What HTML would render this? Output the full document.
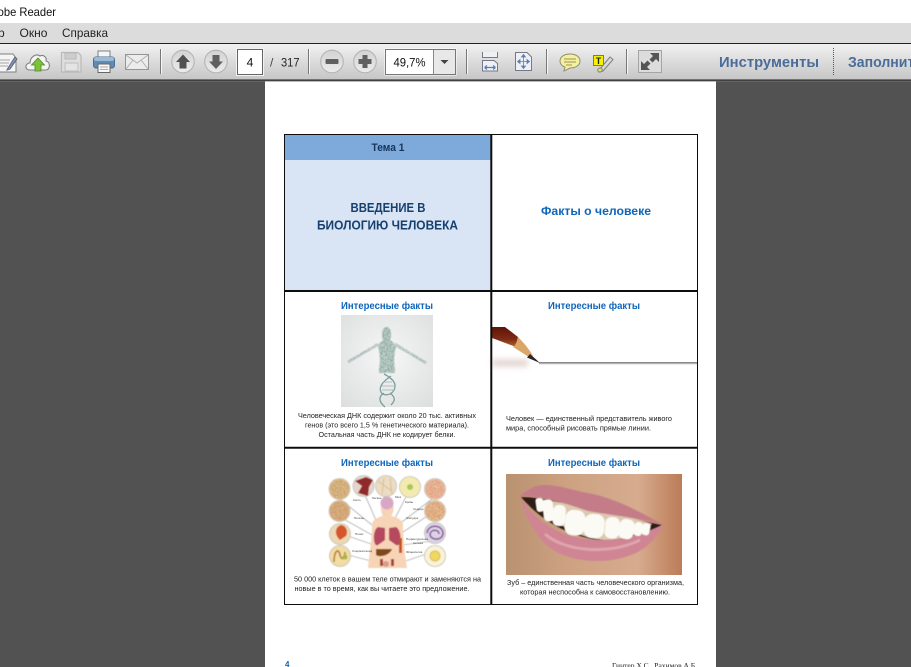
<!DOCTYPE html>
<html><head><meta charset="utf-8"><style>
html,body{margin:0;padding:0;width:911px;height:667px;overflow:hidden;background:#525252}
svg{display:block}
text{font-family:"Liberation Sans",sans-serif}
</style></head><body>
<svg width="911" height="667" viewBox="0 0 911 667" xmlns="http://www.w3.org/2000/svg">
<defs>
<linearGradient id="tb" x1="0" y1="0" x2="0" y2="1"><stop offset="0" stop-color="#f1f1f1"/><stop offset="1" stop-color="#c6c6c6"/></linearGradient>
<linearGradient id="btn" x1="0" y1="0" x2="0" y2="1"><stop offset="0" stop-color="#d2d2d2"/><stop offset="1" stop-color="#ececec"/></linearGradient>
<linearGradient id="skin" x1="0" y1="0" x2="1" y2="0"><stop offset="0" stop-color="#b99270"/><stop offset=".35" stop-color="#cda282"/><stop offset=".75" stop-color="#d7ab8e"/><stop offset="1" stop-color="#bb7c58"/></linearGradient>
<linearGradient id="penc" x1="0" y1="0" x2="0" y2="1"><stop offset="0" stop-color="#5e140c"/><stop offset=".6" stop-color="#7e2a14"/><stop offset="1" stop-color="#b1682e"/></linearGradient>
<radialGradient id="dnabg" cx=".5" cy=".45" r=".75"><stop offset="0" stop-color="#f6f6f6"/><stop offset="1" stop-color="#dcdede"/></radialGradient>
<filter id="b" x="-5%" y="-5%" width="110%" height="110%"><feGaussianBlur stdDeviation=".33"/></filter>
<filter id="b2" x="-20%" y="-20%" width="140%" height="140%"><feGaussianBlur stdDeviation=".55"/></filter>
<filter id="b3" x="-30%" y="-80%" width="160%" height="260%"><feGaussianBlur stdDeviation="2.6"/></filter>
<filter id="speck" x="-5%" y="-5%" width="110%" height="110%"><feTurbulence type="fractalNoise" baseFrequency="0.9" numOctaves="2" seed="3" result="n"/><feColorMatrix in="n" type="matrix" values="0 0 0 0 0 0 0 0 0 0 0 0 0 0 0 0 0 0 8 -3.6" result="m"/><feComposite in="SourceGraphic" in2="m" operator="in"/><feGaussianBlur stdDeviation=".45"/></filter>
</defs>

<!-- title / menu / toolbar -->
<rect width="911" height="23" fill="#fff"/>
<text x="-16" y="16" font-size="12" fill="#111" textLength="72" lengthAdjust="spacingAndGlyphs">Adobe Reader</text>
<rect y="23" width="911" height="20" fill="#dcdcdc"/>
<text x="-2" y="37" font-size="12" fill="#222">р</text>
<text x="19.5" y="37" font-size="12" fill="#222" textLength="28" lengthAdjust="spacingAndGlyphs">Окно</text>
<text x="62" y="37" font-size="12" fill="#222" textLength="46" lengthAdjust="spacingAndGlyphs">Справка</text>
<rect y="43" width="911" height="1" fill="#222"/>
<rect y="44" width="911" height="35.5" fill="url(#tb)"/>
<rect y="79.5" width="911" height="1.2" fill="#222"/>
<rect y="80.7" width="911" height=".8" fill="#777"/>

<!-- edit -->
<path d="M-3 54H13L16 58V72H-3Z" fill="#f5f5f5" stroke="#808080"/>
<path d="M0 60H10M0 63H9M0 66H8" stroke="#a5a5a5"/>
<path d="M8 68L15 57L17 59L10 69L7 70Z" fill="#7d97b8" stroke="#667"/>
<!-- cloud -->
<path d="M30 70C24 70 25 63 30 63C30 57 36 53 40 56C44 54 47 58 46 61C51 62 50 70 46 70Z" fill="#f4f4f4" stroke="#808080" stroke-width="1.1"/>
<path d="M38 58L44.5 65H41V71H35V65H31.5Z" fill="#7cc23d" stroke="#4c8a25" stroke-width=".8"/>
<!-- save -->
<path d="M61.5 52.5H78L81 55.5V72H61.5Z" fill="#dedede" stroke="#b9b9b9" stroke-width="1.2"/>
<rect x="65" y="53" width="11" height="6" fill="#cdcdcd" stroke="#b9b9b9"/>
<rect x="65" y="63" width="13" height="8" fill="#e4e4e4" stroke="#bdbdbd"/>
<!-- print -->
<rect x="98" y="51" width="12" height="7" fill="#f5f5f5" stroke="#808080"/>
<rect x="93.5" y="57" width="21" height="11" rx="2.5" fill="#5f8cb5" stroke="#4a6d90"/>
<rect x="94" y="57" width="20" height="4" rx="2" fill="#9dbad4"/>
<rect x="98" y="64" width="12" height="8.5" fill="#f8f8f8" stroke="#666"/>
<path d="M100 67H108M100 69.5H108" stroke="#aaa"/>
<!-- mail -->
<rect x="125.5" y="54.5" width="23" height="15" fill="#ececec" stroke="#949494"/>
<path d="M126 55L137 63L148 55M126 69L133 60M148 69L141 60" fill="none" stroke="#b0b0b0"/>

<g stroke="#777"><path d="M160.5 49V74M308.5 49V74M466.5 49V74M546.5 49V74M626.5 49V74"/></g>
<g stroke="#fff" opacity=".8"><path d="M161.5 49V74M309.5 49V74M467.5 49V74M547.5 49V74M627.5 49V74"/></g>

<!-- nav buttons -->
<g fill="url(#btn)" stroke="#b4b4b4" stroke-width="1.1"><circle cx="183" cy="61.5" r="11.3"/><circle cx="216" cy="61.5" r="11.3"/><circle cx="332" cy="61.5" r="11.3"/><circle cx="365" cy="61.5" r="11.3"/></g>
<path d="M183 54.5L190 62H186.5V68.5H179.5V62H176Z" fill="#505050"/>
<path d="M216 69L209 61.5H212.5V55H219.5V61.5H223Z" fill="#606060"/>
<rect x="325.5" y="59" width="13" height="5" rx="1" fill="#606060"/>
<path d="M362.5 55H367.5V59H371.5V64H367.5V68H362.5V64H358.5V59H362.5Z" fill="#606060"/>

<!-- page input -->
<rect x="236.5" y="48.5" width="27" height="27" fill="#fff" stroke="#f2f2f2"/>
<rect x="237.5" y="49.5" width="25" height="25" fill="#fff" stroke="#666"/>
<text x="250" y="66.5" font-size="12" fill="#111" text-anchor="middle">4</text>
<text x="270" y="66.5" font-size="12" fill="#444">/</text>
<text x="281" y="66.5" font-size="12" fill="#222" textLength="18.5" lengthAdjust="spacingAndGlyphs">317</text>
<!-- zoom combo -->
<rect x="384.5" y="48.5" width="72" height="27" fill="#fff"/>
<rect x="385.5" y="49.5" width="70" height="25" fill="#fff" stroke="#777"/>
<rect x="434" y="50" width="21" height="24" fill="#e8e8e8"/>
<path d="M433.5 50V74" stroke="#888"/>
<path d="M440.5 60H448.5L444.5 64Z" fill="#444"/>
<text x="393.5" y="66.5" font-size="12" fill="#111" textLength="32" lengthAdjust="spacingAndGlyphs">49,7%</text>

<!-- fit width -->
<path d="M482.5 52V57.5H497.5V52M482.5 71V60.5H494L497.5 63.5V71Z" fill="#eef0f5" stroke="#778"/>
<path d="M484.5 67.5H495.5M484.5 67.5L487 65.5M484.5 67.5L487 69.5M495.5 67.5L493 65.5M495.5 67.5L493 69.5" fill="none" stroke="#5a7db5" stroke-width="1.2"/>
<!-- fit page -->
<path d="M515.5 52.5H527L531.5 57V70.5H515.5Z" fill="#eef0f5" stroke="#778"/>
<path d="M523.5 54.5V68.5M517.5 61.5H529.5M523.5 54.5L521.5 57H525.5ZM523.5 68.5L521.5 66H525.5ZM517.5 61.5L520 59.5V63.5ZM529.5 61.5L527 59.5V63.5Z" fill="#5a7db5" stroke="#5a7db5" stroke-width=".8"/>
<!-- comment -->
<path d="M570 54C564 54 560 57 560 61C560 64 562 66 565 67L564 71L570 68C576 68 580 65 580 61C580 57 576 54 570 54Z" fill="#f5f0a0" stroke="#8f8f70"/>
<path d="M564 59H576M564 62H576M566 65H572" stroke="#99945a"/>
<!-- highlight -->
<rect x="593.5" y="55.5" width="10" height="10" fill="#f7f200" stroke="#777"/>
<text x="598.5" y="64" font-size="9" font-weight="bold" fill="#222" text-anchor="middle">T</text>
<path d="M600 69L610 57L613 59.5L603 71L599 72Z" fill="#d9d9d9" stroke="#808080"/>
<ellipse cx="600" cy="70" rx="2.3" ry="2" fill="#e3e34a" stroke="#808080"/>
<!-- expand -->
<rect x="638.5" y="50.5" width="23" height="22" fill="#dcdcdc" stroke="#a5a5a5"/>
<path d="M650 53H659V62L656 59L652.5 62.5L649.5 59.5L653 56Z" fill="#555"/>
<path d="M650 70H641V61L644 64L647.5 60.5L650.5 63.5L647 67Z" fill="#555"/>

<text x="719" y="67" font-size="14.5" font-weight="bold" fill="#4b6c99" textLength="100" lengthAdjust="spacingAndGlyphs">Инструменты</text>
<path d="M833.5 48V75" stroke="#555" stroke-dasharray="1 1"/>
<text x="848" y="67" font-size="14.5" font-weight="bold" fill="#4b6c99" textLength="75" lengthAdjust="spacingAndGlyphs">Заполнить</text>

<!-- page -->
<rect x="265" y="81.5" width="451" height="586" fill="#fff"/>

<g filter="url(#b)">
<!-- first row -->
<rect x="285" y="135" width="206" height="25" fill="#7eaadb"/>
<rect x="285" y="160" width="206" height="130" fill="#d9e5f5"/>
<text x="388" y="151" font-size="11" font-weight="bold" fill="#17365d" text-anchor="middle" textLength="33" lengthAdjust="spacingAndGlyphs">Тема 1</text>
<text x="388" y="212" font-size="13" font-weight="bold" fill="#17406f" text-anchor="middle" textLength="75" lengthAdjust="spacingAndGlyphs">ВВЕДЕНИЕ В</text>
<text x="387.5" y="229.5" font-size="13" font-weight="bold" fill="#17406f" text-anchor="middle" textLength="141" lengthAdjust="spacingAndGlyphs">БИОЛОГИЮ ЧЕЛОВЕКА</text>
<text x="596" y="215" font-size="12" font-weight="bold" fill="#0f66bb" text-anchor="middle" textLength="110" lengthAdjust="spacingAndGlyphs">Факты о человеке</text>

<!-- headings -->
<g font-size="10.5" font-weight="bold" fill="#0f66bb" text-anchor="middle">
<text x="387" y="309" textLength="92" lengthAdjust="spacingAndGlyphs">Интересные факты</text>
<text x="594" y="309" textLength="92" lengthAdjust="spacingAndGlyphs">Интересные факты</text>
<text x="387" y="466" textLength="92" lengthAdjust="spacingAndGlyphs">Интересные факты</text>
<text x="594" y="466" textLength="92" lengthAdjust="spacingAndGlyphs">Интересные факты</text>
</g>

<!-- DNA image -->
<rect x="341" y="315" width="92" height="92" fill="url(#dnabg)"/>
<g filter="url(#b2)" opacity=".5">
<path d="M348 362L378 345M426 363L395 345" stroke="#b4c1c1" stroke-width="2" fill="none"/>
<path d="M386.5 327C391 327 392 335 390 340L396 345L394 358L395 373H379L380 358L378 345L383 340C381 335 382 327 386.5 327Z" fill="#b0c2bf"/>
</g>
<g filter="url(#speck)" opacity=".7">
<path d="M348 362L378 344M426 363L395 344" stroke="#7c9496" stroke-width="2.6" fill="none"/>
<path d="M386.5 327C391 327 392 335 390 340L396 345L394 358L395 373H379L380 358L378 345L383 340C381 335 382 327 386.5 327Z" fill="#5b8a74"/>
</g>
<path d="M384 374C396 380 396 386 394 390C391 396 382 396 381 392C378 386 385 380 391 376M390 393C395 397 396 400 391 405M384 393C378 397 379 402 385 407" fill="none" stroke="#6f9693" stroke-width="1.3" opacity=".9"/>
<path d="M383 382H392M381.5 386H394M382 390H393" stroke="#9ab2af" stroke-width=".8"/>

<!-- pencil -->
<rect x="492" y="359" width="36" height="8" fill="#e0d0cc" filter="url(#b3)" opacity=".8"/>
<rect x="539" y="362" width="159" height="1.5" fill="#8a8a8a"/>
<rect x="539" y="363.5" width="159" height="1" fill="#dadada"/>
<path d="M492 327H505L518 337C517 340 517 344 516 347L492 338Z" fill="url(#penc)"/>
<path d="M518 337C524 343 529 349 533 356L529 357L513 347C516 345 517 341 518 337Z" fill="#dba768"/>
<path d="M530 354L540 363L527 357.5Z" fill="#272727"/>

<!-- cells image -->
<g filter="url(#b2)">
<g stroke="#8f8f8f" stroke-width=".6" fill="none"><path d="M340 499L372 525M365 495L378 525M384 495L385 522M407 495L393 522M432 499L398 525M340 517L372 535M432 513L403 532M345 535L374 545M348 555L383 564M432 552L400 563M432 541L403 545"/></g>
<path d="M368 568C369 555 372 540 372 525C372 520 378 517 383 516C380 512 379 498 387 498C395 498 395 512 391 516C397 517 403 520 403 525C403 540 405 555 407 568H397V556C397 550 398 545 398 540H377C377 545 378 550 378 556V568Z" fill="#f7d4b6"/>
<path d="M377 538H398C398 550 400 560 402 568H373C375 560 377 550 377 538Z" fill="#f7d4b6"/>
<circle cx="387" cy="503" r="6.5" fill="#d8a7c6"/>
<path d="M378 527C372 530 373 548 378 545L385 540V528ZM396 527C402 530 402 548 396 545L389 540V528Z" fill="#b54a5e"/>
<path d="M376 549H392C390 555 380 558 376 555Z" fill="#7f481e"/>
<rect x="380" y="559" width="3" height="7" fill="#a4443a"/><rect x="391" y="559" width="3" height="7" fill="#a4443a"/>
<rect x="399" y="538" width="3" height="15" fill="#c2552a"/>
<circle cx="386" cy="564" r="3" fill="#d99a8c"/>
<g stroke="#c4c0b4" stroke-width=".8">
<circle cx="339.5" cy="489" r="10.5" fill="#e2c08c"/>
<circle cx="363.5" cy="486" r="10.5" fill="#e5d5cc"/>
<circle cx="386" cy="486" r="10.5" fill="#ecdcc4"/>
<circle cx="410" cy="487" r="10.5" fill="#f3eab0"/>
<circle cx="435" cy="489" r="10.5" fill="#f0c4a8"/>
<circle cx="339.5" cy="511" r="10.5" fill="#e2b688"/>
<circle cx="435" cy="511" r="10.5" fill="#eec49c"/>
<circle cx="340" cy="534" r="10.5" fill="#ecd8b4"/>
<circle cx="435" cy="533" r="10.5" fill="#d8d4e4"/>
<circle cx="340" cy="556" r="10.5" fill="#f2dca4"/>
<circle cx="435" cy="556" r="10.5" fill="#f9f3d4"/>
</g>
<path d="M355 481L362 486L358 493L368 496L369 487L373 480L366 477Z" fill="#8e2b2c"/>
<path d="M340 540C333 534 336 525 342 525C347 527 348 532 346 536Z" fill="#d4562c"/>
<path d="M334 562C334 550 339 548 340 555C341 560 345 560 345 552" fill="none" stroke="#b57a2a" stroke-width="1.5"/>
<circle cx="345" cy="557" r="2.5" fill="#a2b84a"/>
<circle cx="435" cy="556" r="5" fill="#efd95a" stroke="#d8b870"/><circle cx="410" cy="487" r="3" fill="#a4c95a"/>
<path d="M427 533C428 524 442 524 443 533C443 541 430 541 430 534C431 529 439 529 439 534" fill="none" stroke="#8a4c92" stroke-width="1.5"/>
<path d="M378 481L392 491M384 478L382 494M390 478L392 494" stroke="#d6bf8e" fill="none"/>
</g>
<g filter="url(#speck)" fill="#a87a48" opacity=".55"><circle cx="339.5" cy="489" r="9.5"/><circle cx="339.5" cy="511" r="9.5"/><circle cx="435" cy="489" r="9.5" fill="#c46e4a"/><circle cx="435" cy="511" r="9.5" fill="#b4703e"/></g>
<g font-size="3" fill="#444"><text x="353" y="501">Кость</text><text x="372" y="499">Легкие</text><text x="395" y="498">Мозг</text><text x="405" y="503">Кровь</text><text x="413" y="510">Сердце</text><text x="406" y="519">Желудок</text><text x="354" y="519">Печень</text><text x="355" y="535">Почки</text><text x="352" y="552">Сперматозоид</text><text x="406" y="540">Поджелудочная</text><text x="413" y="544">железа</text><text x="406" y="553">Яйцеклетка</text></g>

<!-- teeth image -->
<rect x="506" y="474" width="176" height="101" fill="url(#skin)"/>
<g filter="url(#b2)">
<path d="M521 497C550 497 590 510 662 525C640 536 620 541 605 541C575 538 545 525 521 497Z" fill="#2e1c16"/>
<path d="M536 499C570 503 615 512 652 524C640 534 622 540 605 540C580 538 552 525 536 499Z" fill="#ddc8b0"/>
<path d="M519.5 496C528 489 535 485 545 485C560 485 575 491 588 493C615 498 640 512 664 525C640 518 610 515 588 511C570 505 545 496 519.5 496Z" fill="#c47d88"/>
<path d="M520 497C530 515 550 530 571 536C590 541 615 541 631 536C642 533 652 530 664 525C655 540 645 550 631 555C620 559 610 561 598 561C580 561 565 557 555 551C540 543 525 520 520 497Z" fill="#cf8593"/>
<path d="M545 534C565 552 610 555 640 540" fill="none" stroke="#e3abb3" stroke-width="3" opacity=".8"/>
</g>
<g fill="#fbfaf5" filter="url(#b2)">
<rect x="536" y="498" width="7.5" height="14" rx="3" transform="rotate(-8 539 505)"/>
<rect x="543" y="499.5" width="10.5" height="22" rx="4.5" transform="rotate(-6 548 510)"/>
<rect x="553" y="505" width="12.5" height="21" rx="5" transform="rotate(5 559 515)"/>
<rect x="565" y="510" width="20" height="25.5" rx="8" transform="rotate(6 575 522)"/>
<rect x="584" y="514" width="20.5" height="24" rx="8" transform="rotate(5 594 526)"/>
<rect x="605" y="517" width="14.5" height="21.5" rx="6" transform="rotate(5 612 527)"/>
<rect x="619" y="519" width="15" height="20" rx="6" transform="rotate(10 626 529)"/>
<rect x="634" y="522" width="8.5" height="14" rx="3.5" transform="rotate(12 638 529)"/>
<rect x="642" y="523" width="8" height="12" rx="3" transform="rotate(15 645 529)"/>
</g>

<!-- body text -->
<g font-size="7.5" fill="#222" text-anchor="middle">
<text x="387" y="418" textLength="178" lengthAdjust="spacingAndGlyphs">Человеческая ДНК содержит около 20 тыс. активных</text>
<text x="387" y="427.5" textLength="164" lengthAdjust="spacingAndGlyphs">генов (это всего 1,5 % генетического материала).</text>
<text x="387" y="437" textLength="137" lengthAdjust="spacingAndGlyphs">Остальная часть ДНК не кодирует белки.</text>
<text x="589" y="421" textLength="166" lengthAdjust="spacingAndGlyphs">Человек — единственный представитель живого</text>
<text x="578.5" y="430.5" textLength="145" lengthAdjust="spacingAndGlyphs">мира, способный рисовать прямые линии.</text>
<text x="387.5" y="581.5" textLength="187" lengthAdjust="spacingAndGlyphs">50 000 клеток в вашем теле отмирают и заменяются на</text>
<text x="382" y="591" textLength="175" lengthAdjust="spacingAndGlyphs">новые в то время, как вы читаете это предложение.</text>
<text x="595.5" y="585" textLength="177" lengthAdjust="spacingAndGlyphs">Зуб – единственная часть человеческого организма,</text>
<text x="595" y="594.5" textLength="150" lengthAdjust="spacingAndGlyphs">которая неспособна к самовосстановлению.</text>
</g>

<!-- grid -->
<g fill="none" stroke="#111">
<path d="M284.5 134.5H697.5V604.5H284.5Z"/>
<path d="M491.3 134V605" stroke-width="2"/>
<path d="M284 291H698M284 447.8H698" stroke-width="2"/>
</g>

<!-- footer -->
<text x="285" y="667" font-size="8" font-weight="bold" fill="#0f66bb">4</text>
<text x="612" y="668" font-size="7.5" fill="#222" textLength="85" lengthAdjust="spacingAndGlyphs" style="font-family:'Liberation Serif',serif">Гинтер Х.С., Рахимов А.Б.</text>
</g>
</svg>
</body></html>
